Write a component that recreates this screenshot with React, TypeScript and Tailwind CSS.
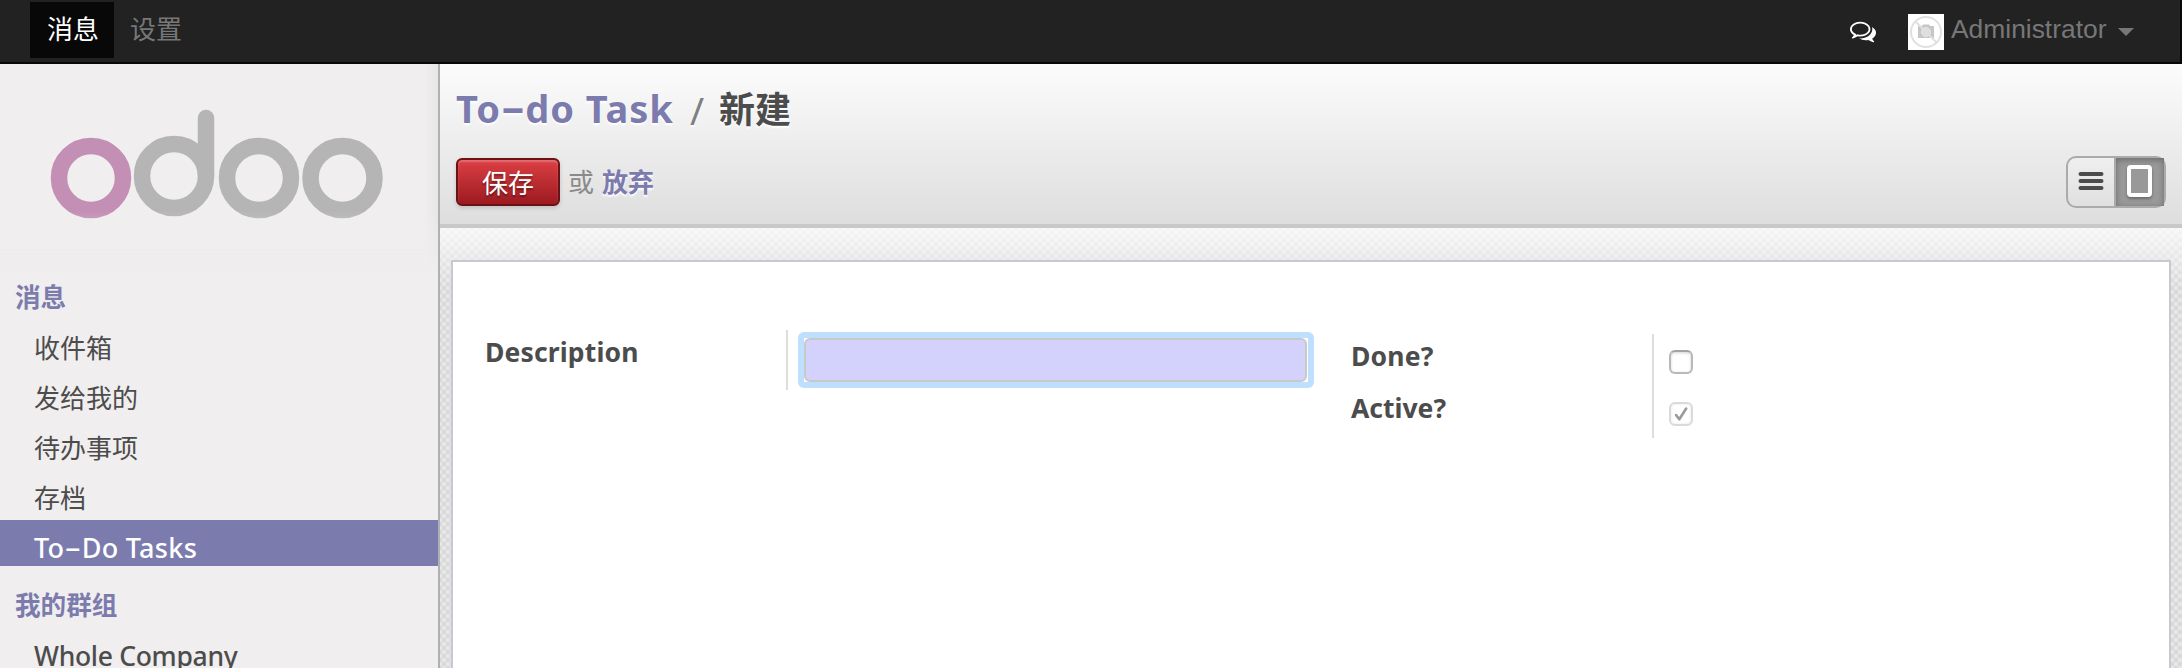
import React from 'react';

const menu = ['收件箱', '发给我的', '待办事项', '存档'];

function Logo() {
  return (
    <svg className="h-[112px] w-[336px]" viewBox="0 0 336 112" fill="none" strokeWidth="16.5">
      <circle cx="41" cy="70" r="32" stroke="#c48fb5" />
      <g stroke="#b5b5b5">
        <circle cx="124" cy="68" r="32" />
        <path d="M156 10V68" strokeLinecap="round" />
        <circle cx="209" cy="70" r="32" />
        <circle cx="292.500" cy="70" r="32" />
      </g>
    </svg>
  );
}

function Comments() {
  return (
    <svg className="mr-8 mb-0.5 size-[26px]" viewBox="0 0 1792 1792" fill="#fff">
      <path d="M704 384q-153 0-286 52t-211.500 141-78.500 191q0 82 53 158t149 132l97 56-35 84q34-20 62-39l44-31 53 10q78 14 153 14 153 0 286-52t211.500-141 78.500-191-78.500-191-211.500-141-286-52zm0-128q191 0 353.500 68.500t256.500 186.500 94 257-94 257-256.500 186.500-353.500 68.500q-86 0-176-16-124 88-278 128-36 9-86 16h-3q-11 0-20.500-8t-11.500-21q-1-3-1-6.500t.5-6.500 2-6l2.500-5 3.500-5.500 4-5 4.500-5 4-4.500q5-6 23-25t26-29.500 22.500-29 25-38.500 20.500-44q-124-72-195-177t-71-224q0-139 94-257t256.500-186.500 353.500-68.500zm822 1169q10 24 20.500 44t25 38.500 22.500 29 26 29.500 23 25q1 1 4 4.500t4.500 5 4 5 3.500 5.500l2.500 5 2 6 .5 6.500-1 6.500q-3 14-13 22t-22 7q-50-7-86-16-154-40-278-128-90 16-176 16-271 0-472-132 58 4 88 4 161 0 309-45t264-129q125-92 192-212t67-254q0-77-23-152 129 71 204 178t75 230q0 120-71 224.500t-195 176.500z" />
    </svg>
  );
}

function Avatar() {
  return (
    <svg className="size-9 bg-white" viewBox="0 0 36 36" fill="none">
      <path d="M10 12h4l1-1.500h6l1 1.500h4v12H10z" fill="#c6c6c6" />
      <circle cx="18" cy="18" r="4.500" fill="#dedede" stroke="#e6e6e6" />
      <circle cx="18" cy="18" r="15" stroke="#e0e0e0" strokeWidth="2" />
      <path d="M7.500 7.500l21 21" stroke="#e0e0e0" strokeWidth="2" />
    </svg>
  );
}

function Dash() {
  return <span className="inline-block w-[0.64em] -translate-y-[0.04em] scale-x-[1.9] text-center tracking-normal">-</span>;
}

function Section({ children }: { children: React.ReactNode }) {
  return <div className="h-[46px] pl-[15px] text-[25.600px] leading-[47px] font-bold text-[#7c7bad]">{children}</div>;
}

function Checkbox({ checked = false }: { checked?: boolean }) {
  return (
    <div className={`mb-7 flex size-6 items-center justify-center rounded-md border-2 ${checked ? 'border-[#dadada] shadow-[inset_0_0_3px_rgba(0,0,0,.1)]' : 'border-[#b8b8b8] border-t-[#a3a3a3] shadow-[inset_0_1px_3px_rgba(0,0,0,.18)]'}`}>
      {checked && (
        <svg className="size-4 shrink-0" viewBox="0 0 16 16" fill="none">
          <path d="M3 9l3.300 4.300L13.200 2.500" stroke="#999" strokeWidth="2.600" strokeLinecap="round" strokeLinejoin="round" />
        </svg>
      )}
    </div>
  );
}

export default function App() {
  return (
    <div className="flex h-[668px] w-[2182px] flex-col overflow-hidden bg-white font-['Noto_Sans','Noto_Sans_CJK_SC',sans-serif] text-[26px] text-[#4c4c4c]">
      <nav className="flex h-16 shrink-0 items-start border-r-2 border-b-2 border-[#080808] bg-[#222] pt-0.5 pl-[30px] font-['Liberation_Sans','Noto_Sans_CJK_SC',sans-serif] text-[#777]">
        <div className="h-14 w-[84px] bg-[#080808] pl-[17px] leading-[56px] text-white">消息</div>
        <div className="h-14 pl-4 leading-[56px]">设置</div>
        <div className="ml-auto flex h-14 items-center pt-1 pr-[46px]">
          <Comments />
          <Avatar />
          <span className="ml-[7px] w-[156px] pb-1 text-[26.400px] whitespace-nowrap">Administrator</span>
          <svg className="ml-[11px] h-2 w-4" viewBox="0 0 16 8"><path d="M0 0h16l-8 8z" fill="#777" /></svg>
        </div>
      </nav>
      <div className="flex min-h-0 flex-1">
        <aside className="w-[440px] shrink-0 overflow-hidden border-r-2 border-[#afafb6] bg-[#f0eeee]">
          <div className="h-[210px] bg-linear-to-l from-[#e7e5e6] to-[#f0eeee] to-[14px] pt-11 pl-[50px] [mask-image:linear-gradient(black_70%,transparent_100%)]"><Logo /></div>
          <Section>消息</Section>
          <ul>
            {menu.map((m) => <li key={m} className="h-[50px] pl-[34px] leading-[56px]">{m}</li>)}
            <li className="h-[46px] bg-[#7c7bad] pl-[34px] text-[27px] leading-[55px] font-medium tracking-[0.300px] text-white">To<Dash />Do Tasks</li>
          </ul>
          <div className="mt-4"><Section>我的群组</Section></div>
          <div className="pl-[34px] text-[26.500px] leading-[56px] font-medium tracking-[-0.300px]">Whole Company</div>
        </aside>
        <main className="flex min-w-0 flex-1 flex-col">
          <header className="h-[164px] shrink-0 border-b-4 border-[#c8c8c8] bg-linear-to-b from-[#fcfcfc] to-[#dedede] pr-4 pl-4">
            <h1 className="flex h-[92px] items-center text-4xl leading-[92px] font-bold [text-shadow:0_2px_2px_white]">
              <span className="w-[234px] pb-[3px] text-[38px] leading-[89px] tracking-[0.950px] whitespace-nowrap text-[#7c7bad]">To<Dash />do Task</span>
              <span className="w-[29px] text-[38px] leading-[92px] font-normal text-[#808080]">/</span>
              <span>新建</span>
            </h1>
            <div className="flex items-center">
              <button className="mt-px mb-px h-12 w-[104px] rounded-md border-2 border-[#6b1216] bg-linear-to-b from-[#dc3f44] to-[#9c1a20] leading-[46px] text-white shadow-[0_2px_4px_rgba(0,0,0,.15),inset_0_2px_2px_rgba(255,255,255,.25)] [text-shadow:0_2px_2px_rgba(0,0,0,.4)]">保存</button>
              <span className="ml-2 text-[#8a8a8a]">或</span>
              <span className="ml-2 font-bold text-[#7c7bad] [text-shadow:0_2px_2px_white]">放弃</span>
              <div className="ml-auto flex h-[52px] w-[100px] rounded-[10px] border-2 border-[#ababab] bg-linear-to-b from-[#efefef] to-[#e0e0e0]">
                <div className="flex w-12 items-center justify-center border-r-2 border-[#ababab] pr-px pb-[3px]">
                  <svg className="h-[20px] w-[26px]" viewBox="0 0 26 20"><path d="M2.500 3h21M2.500 10h21M2.500 17h21" stroke="#4c4c4c" strokeWidth="4" strokeLinecap="round" /></svg>
                </div>
                <div className="flex flex-1 items-center justify-center bg-[#999] pr-0.5 pb-[3px] shadow-[inset_0_2px_6px_rgba(0,0,0,.3)]">
                  <span className="h-8 w-[25px] rounded border-4 border-white shadow-[0_2px_3px_rgba(0,0,0,.3)]" />
                </div>
              </div>
            </div>
          </header>
          <section className="flex-1 bg-[#efefef] bg-[linear-gradient(to_bottom,rgba(255,255,255,.75),rgba(255,255,255,0)_60px),radial-gradient(circle,#d9d9d9_1.500px,transparent_3.700px),radial-gradient(circle,#d9d9d9_1.500px,transparent_3.700px)] bg-size-[100%_100%,8px_8px,8px_8px] bg-position-[0_0,0_0,4px_4px] pt-8 pr-[11px] pl-[11px]">
            <div className="flex h-full border-2 border-b-0 border-[#c8c8d3] bg-white pl-8 text-[26.500px] font-bold">
              <div className="flex pt-[68px]">
                <div className="h-[60px] w-[303px] border-r-2 border-[#ddd] leading-[45px] tracking-[0.150px]">Description</div>
                <div className="mt-0.5 ml-2.5 h-14 w-[516px] rounded-md bg-[#bfdfff] p-1.5">
                  <div className="h-11 bg-white pr-px">
                    <div className="h-11 rounded-md border-2 border-[#c9c9c9] bg-[#d2d2fc]" />
                  </div>
                </div>
              </div>
              <div className="ml-9 flex pt-[72px]">
                <div className="h-[104px] w-[304px] border-r-2 border-[#ddd] pl-px leading-[52px]">
                  <div className="-mt-1 h-[52px] pb-1 tracking-[0.200px]">Done?</div>
                  <div className="h-[52px]">Active?</div>
                </div>
                <div className="pt-4 pl-[15px]">
                  <Checkbox />
                  <Checkbox checked />
                </div>
              </div>
            </div>
          </section>
        </main>
      </div>
    </div>
  );
}
